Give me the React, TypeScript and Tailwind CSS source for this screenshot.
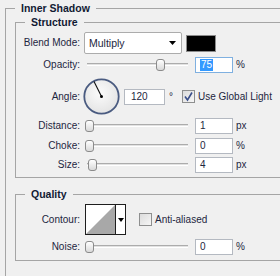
import React from 'react';

const Label = ({ text, w = 'w-[64px]' }: { text: string; w?: string }) => (
  <div className={`${w} shrink-0 text-right`}>{text}</div>
);

const Slider = ({ pos }: { pos: string }) => (
  <div className="relative ml-[5px] h-[12px] w-[103px] shrink-0">
    {/* groove */}
    <div className="absolute left-[2px] right-0 top-[4px] h-[3px] border-t border-[#acacac] border-b border-b-white bg-[#e2e2e2]" />
    {/* thumb */}
    <div
      className={`absolute top-0 ${pos} h-[12px] w-[9px] rounded-[3px] border border-[#8b8b8b] bg-gradient-to-b from-white to-[#d9d9d9]`}
    />
  </div>
);

const NumBox = ({ value, unit, w = 'w-[38px]', ml = 'ml-[7px]' }: { value: string; unit: string; w?: string; ml?: string }) => (
  <>
    <div className={`${ml} ${w} flex h-[16px] shrink-0 items-center border border-[#b4b9c1] bg-white pl-[4px]`}>
      {value}
    </div>
    <span className="ml-[3px]">{unit}</span>
  </>
);

const CheckBox = ({ checked }: { checked?: boolean }) => (
  <div className="flex h-[13px] w-[13px] shrink-0 items-center justify-center border border-[#8e8f8f] bg-gradient-to-br from-[#dcdcdc] to-[#f6f6f6]">
    {checked && (
      <svg width="11" height="11" viewBox="0 0 11 11">
        <path d="M2 5.5 L4.5 9 L9 1.5" fill="none" stroke="#3b4f8a" strokeWidth="1.6" />
      </svg>
    )}
  </div>
);

export default function App() {
  return (
    <div className="h-[276px] w-[280px] overflow-hidden bg-[#f0f0f0] pt-[1px] font-['Liberation_Sans',Arial,sans-serif] text-[10px] leading-[12px] text-[#1d2640]">
      <fieldset className="ml-[5px] w-[300px] border border-[#a5a5a5] pb-[40px] pl-[9px]">
        <legend className="px-[6px] text-[10.5px] font-bold leading-[14px] text-[#111a33]">Inner Shadow</legend>

        {/* Structure */}
        <fieldset className="w-[290px] border border-[#a5a5a5] pb-[4px]">
          <legend className="ml-[9px] px-[6px] text-[10.5px] font-bold leading-[14px] text-[#111a33]">Structure</legend>

          <div className="mt-[3px] flex h-[22px] items-center">
            <Label text="Blend Mode:" />
            <div className="ml-[4px] flex h-[22px] w-[98px] items-center justify-between rounded-[2px] border border-[#acacac] bg-white pl-[4px] pr-[5px] text-[10.5px]">
              <span>Multiply</span>
              <svg width="7" height="4" viewBox="0 0 7 4">
                <path d="M0 0 H7 L3.5 4 Z" fill="#000" />
              </svg>
            </div>
            <div className="ml-[4px] h-[17px] w-[30px] border border-[#8c8c8c] bg-black" />
          </div>

          <div className="mt-[3px] flex h-[16px] items-center">
            <Label text="Opacity:" />
            <Slider pos="left-[71px]" />
            <div className="ml-[7px] flex h-[16px] w-[38px] shrink-0 items-center border border-[#7fb0e0] bg-white pl-[4px]">
              <span className="bg-[#3399ff] px-[1px] leading-[12px] text-white">75</span>
            </div>
            <span className="ml-[3px]">%</span>
          </div>

          <div className="mt-[5px] flex h-[37px] items-center">
            <Label text="Angle:" />
            <svg className="ml-[3px] shrink-0" width="37" height="37" viewBox="0 0 37 37">
              <defs>
                <radialGradient id="dial" cx="0.45" cy="0.4" r="0.6">
                  <stop offset="0" stopColor="#fbfbfb" />
                  <stop offset="1" stopColor="#e4e4e4" />
                </radialGradient>
              </defs>
              <circle cx="18.5" cy="18.5" r="17.2" fill="url(#dial)" stroke="#4a5b80" strokeWidth="1.8" />
              <line x1="18.5" y1="18.5" x2="11" y2="3.5" stroke="#111" strokeWidth="1.1" />
              <circle cx="18.5" cy="18.5" r="1.5" fill="#000" />
            </svg>
            <div className="ml-[4px] flex h-[16px] w-[41px] shrink-0 items-center border border-[#b4b9c1] bg-white pl-[6px]">120</div>
            <span className="w-[17px] pl-[4px]">°</span>
            <CheckBox checked />
            <span className="ml-[3px]">Use Global Light</span>
          </div>

          <div className="mt-[3px] flex h-[16px] items-center">
            <Label text="Distance:" />
            <Slider pos="left-0" />
            <NumBox value="1" unit="px" />
          </div>

          <div className="mt-[4px] flex h-[16px] items-center">
            <Label text="Choke:" />
            <Slider pos="left-0" />
            <NumBox value="0" unit="%" />
          </div>

          <div className="mt-[3px] flex h-[16px] items-center">
            <Label text="Size:" />
            <Slider pos="left-[3px]" />
            <NumBox value="4" unit="px" />
          </div>
        </fieldset>

        {/* Quality */}
        <fieldset className="mt-[9px] w-[290px] border border-[#a5a5a5] pb-[5px]">
          <legend className="ml-[9px] px-[6px] text-[10.5px] font-bold leading-[14px] text-[#111a33]">Quality</legend>

          <div className="mt-[3px] flex h-[31px] items-center">
            <Label text="Contour:" />
            <div className="ml-[5px] flex h-[31px] w-[41px] shrink-0 border border-[#1e1e1e] bg-white">
              <svg width="29" height="29" viewBox="0 0 29 29" className="shrink-0">
                <rect width="29" height="29" fill="#fff" />
                <path d="M0 29 L29 0 V29 Z" fill="#a8a8a8" />
              </svg>
              <div className="flex flex-1 items-center justify-center border-l border-[#1e1e1e] bg-white">
                <svg width="6" height="4" viewBox="0 0 6 4">
                  <path d="M0 0 H6 L3 4 Z" fill="#000" />
                </svg>
              </div>
            </div>
            <div className="ml-[13px]">
              <CheckBox />
            </div>
            <span className="ml-[3px]">Anti-aliased</span>
          </div>

          <div className="mt-[4px] flex h-[16px] items-center">
            <Label text="Noise:" />
            <Slider pos="left-0" />
            <NumBox value="0" unit="%" />
          </div>
        </fieldset>
      </fieldset>
    </div>
  );
}
